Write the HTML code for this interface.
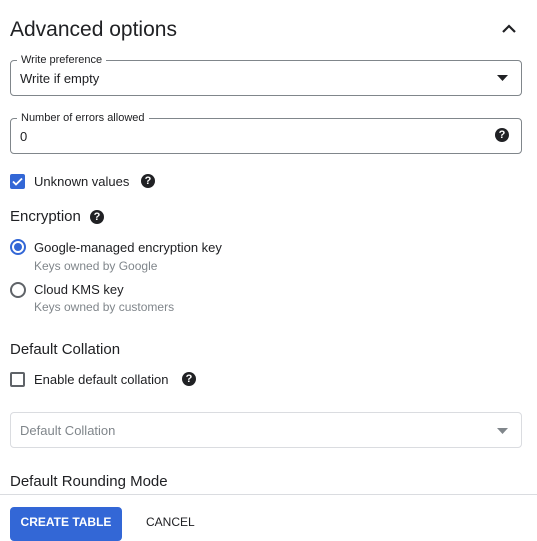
<!DOCTYPE html>
<html><head><meta charset="utf-8"><style>
*{margin:0;padding:0;box-sizing:border-box}
body{width:537px;height:537px;overflow:hidden;background:#fff;font-family:"Liberation Sans",Arial,sans-serif;color:#202124;position:relative}
.a{position:absolute;white-space:nowrap}
.fld{position:absolute;left:10px;width:512px;height:36px;border:1px solid #80868b;border-radius:4px}
.lbl{position:absolute;top:-8px;left:6px;background:#fff;padding:0 4px;font-size:11px;color:#202124;line-height:14px}
.val{position:absolute;left:9px;top:10px;font-size:13px;line-height:15px}
.help{position:absolute;width:14px;height:14px;border-radius:50%;background:#202124;color:#fff;font-size:11px;font-weight:bold;text-align:center;line-height:14px}
.cb{position:absolute;left:10px;width:15px;height:15px;border-radius:2px}
.t13{font-size:13px;line-height:15px}
.t12{font-size:12px;line-height:14px;color:#80868b}
.h{font-size:15px;line-height:18px}
.radio{position:absolute;left:10px;width:16px;height:16px;border-radius:50%;border:2px solid #5f6368}
</style></head><body>
<div class="a" style="left:10px;top:18px;font-size:21px;line-height:24px">Advanced options</div>
<svg class="a" style="left:501px;top:23px" width="16" height="12" viewBox="0 0 16 12"><path d="M2 9 L8 3 L14 9" fill="none" stroke="#202124" stroke-width="2.2"/></svg>

<div class="fld" style="top:60px"><div class="lbl">Write preference</div><div class="val">Write if empty</div>
<svg style="position:absolute;right:13px;top:14px" width="11" height="6"><path d="M0 0H11L5.5 6Z" fill="#202124"/></svg></div>

<div class="fld" style="top:118px"><div class="lbl">Number of errors allowed</div><div class="val">0</div>
<div class="help" style="right:12px;top:9px">?</div></div>

<div class="cb" style="top:174px;background:#3367d6"><svg width="15" height="15"><path d="M3 7.5L6 10.5L12 4.5" fill="none" stroke="#fff" stroke-width="1.8"/></svg></div>
<div class="a t13" style="left:34px;top:174px">Unknown values</div>
<div class="help" style="left:141px;top:174px">?</div>

<div class="a h" style="left:10px;top:208px">Encryption</div>
<div class="help" style="left:90px;top:210px">?</div>

<div class="radio" style="top:239px;border-color:#3367d6"><div style="position:absolute;left:2px;top:2px;width:8px;height:8px;border-radius:50%;background:#3367d6"></div></div>
<div class="a t13" style="left:34px;top:240px">Google-managed encryption key</div>
<div class="a t12" style="left:34px;top:259px">Keys owned by Google</div>
<div class="radio" style="top:282px"></div>
<div class="a t13" style="left:34px;top:282px">Cloud KMS key</div>
<div class="a t12" style="left:34px;top:300px">Keys owned by customers</div>

<div class="a h" style="left:10px;top:341px">Default Collation</div>
<div class="cb" style="top:372px;border:2px solid #5f6368"></div>
<div class="a t13" style="left:34px;top:372px">Enable default collation</div>
<div class="help" style="left:182px;top:372px">?</div>

<div class="fld" style="top:412px;border-color:#dadce0"><div class="val" style="color:#80868b">Default Collation</div>
<svg style="position:absolute;right:13px;top:15px" width="11" height="6"><path d="M0 0H11L5.5 6Z" fill="#80868b"/></svg></div>

<div class="a h" style="left:10px;top:473px">Default Rounding Mode</div>
<div class="a" style="left:0;top:494px;width:537px;height:1px;background:#dadce0"></div>
<div class="a" style="left:10px;top:507px;width:112px;height:34px;background:#3367d6;border-radius:4px;color:#fff;font-size:12px;font-weight:bold;text-align:center;line-height:31px">CREATE TABLE</div>
<div class="a" style="left:146px;top:515px;font-size:12px;line-height:15px">CANCEL</div>
</body></html>
